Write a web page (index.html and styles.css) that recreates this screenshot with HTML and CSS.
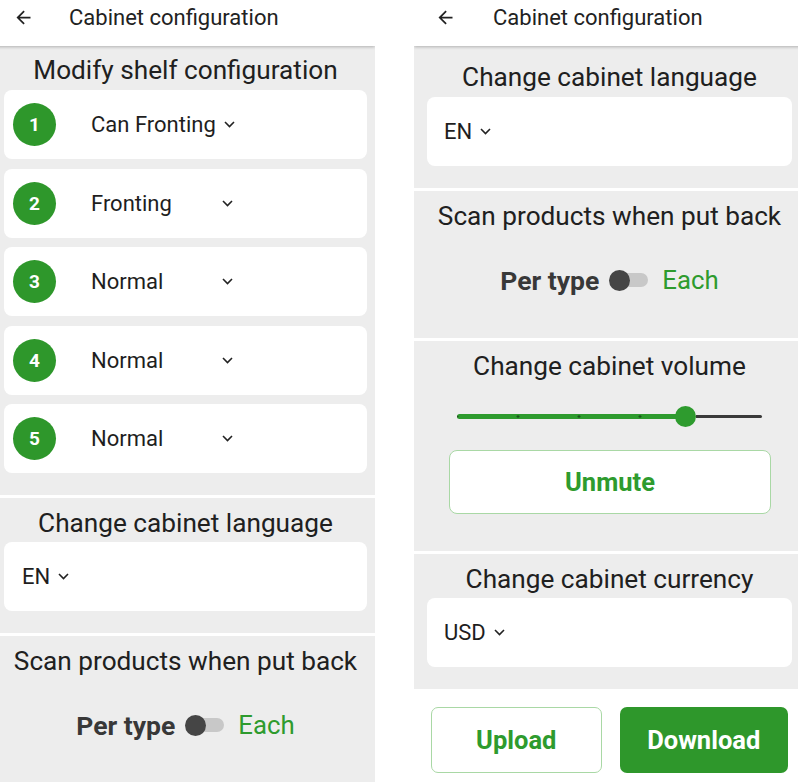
FILE: index.html
```html
<!DOCTYPE html>
<html lang="en">
<head>
    <meta charset="UTF-8">
    <meta name="viewport" content="width=device-width, initial-scale=1.0">
    <title>Cabinet configuration</title>
    <link rel="stylesheet" href="styles.css">
</head>
<body>
    <div class="screens">
        <!-- first screen: top of the settings list -->
        <section class="phone phone-left">
            <header class="appbar">
                <svg class="back" viewBox="0 0 24 24"><path d="M20 11H7.83l5.59-5.59L12 4l-8 8 8 8 1.41-1.41L7.83 13H20v-2z"/></svg>
                <span class="appbar-title">Cabinet configuration</span>
            </header>
            <div class="content">
                <div class="group">
                    <h2>Modify shelf configuration</h2>
                    <div class="shelf-list">
                        <div class="card shelf">
                            <span class="badge">1</span>
                            <span class="select">Can Fronting <svg class="chev" viewBox="0 0 11 7"><polyline points="1,1 5.5,5.5 10,1"/></svg></span>
                        </div>
                        <div class="card shelf">
                            <span class="badge">2</span>
                            <span class="select">Fronting <svg class="chev" viewBox="0 0 11 7"><polyline points="1,1 5.5,5.5 10,1"/></svg></span>
                        </div>
                        <div class="card shelf">
                            <span class="badge">3</span>
                            <span class="select">Normal <svg class="chev" viewBox="0 0 11 7"><polyline points="1,1 5.5,5.5 10,1"/></svg></span>
                        </div>
                        <div class="card shelf">
                            <span class="badge">4</span>
                            <span class="select">Normal <svg class="chev" viewBox="0 0 11 7"><polyline points="1,1 5.5,5.5 10,1"/></svg></span>
                        </div>
                        <div class="card shelf">
                            <span class="badge">5</span>
                            <span class="select">Normal <svg class="chev" viewBox="0 0 11 7"><polyline points="1,1 5.5,5.5 10,1"/></svg></span>
                        </div>
                    </div>
                </div>
                <div class="group">
                    <h2>Change cabinet language</h2>
                    <div class="card plain">
                        <span class="select">EN <svg class="chev" viewBox="0 0 11 7"><polyline points="1,1 5.5,5.5 10,1"/></svg></span>
                    </div>
                </div>
                <div class="group group-toggle">
                    <h2>Scan products when put back</h2>
                    <div class="toggle-row">
                        <span class="per">Per type</span>
                        <span class="switch"><span class="thumb"></span></span>
                        <span class="each">Each</span>
                    </div>
                </div>
            </div>
        </section>

        <!-- second screen: scrolled further down -->
        <section class="phone phone-right">
            <header class="appbar">
                <svg class="back" viewBox="0 0 24 24"><path d="M20 11H7.83l5.59-5.59L12 4l-8 8 8 8 1.41-1.41L7.83 13H20v-2z"/></svg>
                <span class="appbar-title">Cabinet configuration</span>
            </header>
            <div class="content">
                <div class="group">
                    <h2>Change cabinet language</h2>
                    <div class="card plain">
                        <span class="select">EN <svg class="chev" viewBox="0 0 11 7"><polyline points="1,1 5.5,5.5 10,1"/></svg></span>
                    </div>
                </div>
                <div class="group group-toggle">
                    <h2>Scan products when put back</h2>
                    <div class="toggle-row">
                        <span class="per">Per type</span>
                        <span class="switch"><span class="thumb"></span></span>
                        <span class="each">Each</span>
                    </div>
                </div>
                <div class="group group-volume">
                    <h2>Change cabinet volume</h2>
                    <div class="slider">
                        <span class="slider-fill" style="width: 219px"></span>
                        <span class="slider-knob"></span>
                        <span class="slider-rest"></span>
                    </div>
                    <div class="btn btn-outline btn-wide">Unmute</div>
                </div>
                <div class="group">
                    <h2>Change cabinet currency</h2>
                    <div class="card plain">
                        <span class="select">USD <svg class="chev" viewBox="0 0 11 7"><polyline points="1,1 5.5,5.5 10,1"/></svg></span>
                    </div>
                </div>
            </div>
            <div class="actions">
                <div class="btn btn-outline">Upload</div>
                <div class="btn btn-solid">Download</div>
            </div>
        </section>
    </div>
</body>
</html>
```

FILE: styles.css
```css
body {
    font-family: Roboto, 'Liberation Sans', sans-serif;
    margin: 0;
    padding: 0;
    background-color: #fff;
    overflow: hidden;
}

.screens {
    display: flex;
    gap: 39px;
    height: 782px;
    overflow: hidden;
}

.phone {
    flex: none;
    height: 782px;
    overflow: hidden;
    display: flex;
    flex-direction: column;
    background-color: #ededed;
}

.phone-left {
    width: 379px;
    margin-left: -4px;
}

.phone-right {
    width: 391px;
}

.appbar {
    flex: none;
    height: 46px;
    box-sizing: border-box;
    padding: 6px 0 0 17px;
    display: flex;
    align-items: flex-start;
    background-color: #fff;
    box-shadow: 0 1px 3px rgba(0, 0, 0, 0.25);
    position: relative;
    z-index: 1;
}

.phone-right .appbar {
    padding-left: 21px;
}

.back {
    width: 21px;
    height: 21px;
    fill: #222;
    flex: none;
    margin-top: 1px;
}

.appbar-title {
    margin-left: 35px;
    font-size: 22px;
    line-height: 24px;
    color: #222;
}

.phone-right .appbar-title {
    margin-left: 37px;
}

.content {
    background-color: #ededed;
}

.group {
    border-top: 3px solid #fff;
    padding: 10px 8px 22px;
}

.group:first-child {
    border-top: 0;
    padding-top: 9px;
}

.phone-right .group {
    padding-left: 13px;
    padding-right: 13px;
}

.phone-right .group:first-child {
    padding-top: 16px;
}

h2 {
    margin: 0;
    font-size: 26.2px;
    font-weight: 400;
    line-height: 30px;
    text-align: center;
    color: #202020;
}

.card {
    background-color: #fff;
    border-radius: 8px;
    height: 69px;
    margin-top: 5px;
    display: flex;
    align-items: center;
    box-sizing: border-box;
}

.group + .group .card {
    margin-top: 4px;
}

.shelf-list .card + .card {
    margin-top: 9.5px;
}

.shelf {
    padding-left: 9px;
}

.plain {
    padding-left: 18px;
}

.phone-right .plain {
    padding-left: 17px;
}

.badge {
    width: 43px;
    height: 43px;
    border-radius: 50%;
    background-color: #2e972b;
    color: #fff;
    font-weight: bold;
    font-size: 19px;
    display: flex;
    align-items: center;
    justify-content: center;
    flex: none;
}

.select {
    display: inline-flex;
    align-items: center;
    gap: 8px;
    font-size: 22px;
    color: #1e1e1e;
    white-space: nowrap;
}

.shelf .select {
    margin-left: 35px;
    min-width: 142px;
    justify-content: space-between;
}

.chev {
    width: 11px;
    height: 7px;
    flex: none;
    fill: none;
    stroke: #222;
    stroke-width: 1.6;
}

.group-toggle {
    padding-bottom: 43px;
}

.toggle-row {
    margin-top: 34px;
    height: 30px;
    display: flex;
    align-items: center;
    justify-content: center;
}

.per {
    font-size: 26.5px;
    font-weight: bold;
    color: #383838;
}

.switch {
    width: 37px;
    height: 14px;
    margin: 0 14px 0 12px;
    border-radius: 7px;
    background-color: #c8c8c8;
    display: flex;
    align-items: center;
}

.thumb {
    width: 21px;
    height: 21px;
    margin-left: -2px;
    border-radius: 50%;
    background-color: #454545;
}

.each {
    font-size: 25.8px;
    color: #2e9b2e;
}

.group-volume {
    padding-bottom: 37px;
}

.slider {
    margin: 24px 30px 0;
    height: 22px;
    display: flex;
    align-items: center;
}

.slider-fill {
    height: 5px;
    border-radius: 3px 0 0 3px;
    background-color: #2e9b2e;
    background-image: radial-gradient(circle, rgba(0, 0, 0, 0.45) 1px, transparent 1.5px);
    background-size: 61px 5px;
    background-position: 30.5px 0;
}

.slider-knob {
    width: 21px;
    height: 21px;
    margin-left: -1px;
    border-radius: 50%;
    background-color: #2e9b2e;
    flex: none;
}

.slider-rest {
    flex: 1;
    height: 3px;
    border-radius: 0 2px 2px 0;
    background-color: #3a3a3a;
}

.btn {
    height: 66px;
    box-sizing: border-box;
    border-radius: 7px;
    display: flex;
    align-items: center;
    justify-content: center;
    font-size: 25.5px;
    font-weight: bold;
}

.btn-outline {
    border: 1px solid #a9d8a5;
    background-color: #fff;
    color: #2e9b2e;
}

.btn-solid {
    background-color: #2e972b;
    color: #fff;
}

.btn-wide {
    height: 64px;
    margin: 23px 21px 0 22px;
    border-radius: 8px;
}

.actions {
    flex: 1;
    display: flex;
    gap: 18px;
    padding: 18px 17px 0;
    background-color: #fff;
}

.actions .btn {
    flex: 1;
}
```
